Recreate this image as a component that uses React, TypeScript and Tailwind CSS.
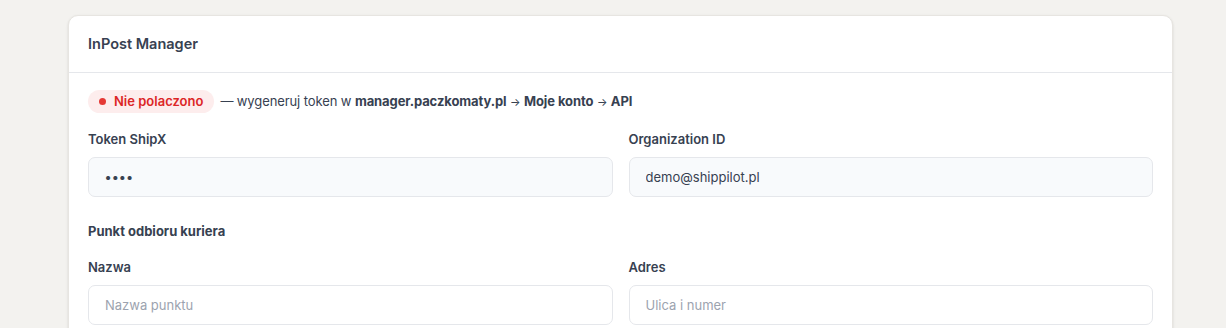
import React from "react";

function Field({ label, value, placeholder, filled, dots }: { label: string; value?: string; placeholder?: string; filled?: boolean; dots?: boolean }) {
  return (
    <div className="flex flex-col">
      <label className="text-[13px] font-semibold text-[#374151] leading-[18px] mb-[9px]">{label}</label>
      <input
        readOnly
        value={value ?? ""}
        placeholder={placeholder}
        className={`h-[40px] rounded-[7px] border border-[#e5e7eb] px-[16px] text-[13px] text-[#374151] placeholder:text-[#9ca3af] outline-none ${filled ? "bg-[#f8fafc]" : "bg-white"} ${dots ? "text-[8px] tracking-[1px] font-bold" : ""}`}
        style={{ fontFamily: "inherit" }}
      />
    </div>
  );
}

export default function App() {
  return (
    <div className="min-h-[328px] w-[1226px] bg-[#f3f2ef] pt-[15px]" style={{ fontFamily: "Inter, 'Noto Sans', sans-serif" }}>
      <div className="ml-[68px] w-[1105px] rounded-[10px] border border-[#e7e5e1] bg-white shadow-sm">
        <div className="h-[57px] border-b border-[#e5e7eb] px-[19px] flex items-center">
          <h2 className="text-[14.5px] font-semibold text-[#374151]">InPost Manager</h2>
        </div>
        <div className="px-[19px] pt-[17px]">
          <div className="flex items-center gap-[6px] text-[13px] text-[#374151]">
            <span className="inline-flex h-[23px] items-center gap-[8px] rounded-full bg-[#fdeded] px-[11px] font-semibold text-[#dc2626]">
              <span className="h-[7px] w-[7px] rounded-full bg-[#e53935]" />
              Nie polaczono
            </span>
            <span className="tracking-[-0.1px]">
              — wygeneruj token w <b className="font-bold">manager.paczkomaty.pl</b> <span className="text-[11px]">→</span> <b className="font-bold">Moje konto</b> <span className="text-[11px]">→</span> <b className="font-bold">API</b>
            </span>
          </div>
          <div className="mt-[17px] grid grid-cols-2 gap-x-[16px]">
            <Field label="Token ShipX" value="••••" filled dots />
            <Field label="Organization ID" value="demo@shippilot.pl" filled />
          </div>
          <div className="mt-[25px] text-[13px] font-bold text-[#374151]">Punkt odbioru kuriera</div>
          <div className="mt-[16px] grid grid-cols-2 gap-x-[16px]">
            <Field label="Nazwa" placeholder="Nazwa punktu" />
            <Field label="Adres" placeholder="Ulica i numer" />
          </div>
          <div className="h-[20px]" />
        </div>
      </div>
    </div>
  );
}
